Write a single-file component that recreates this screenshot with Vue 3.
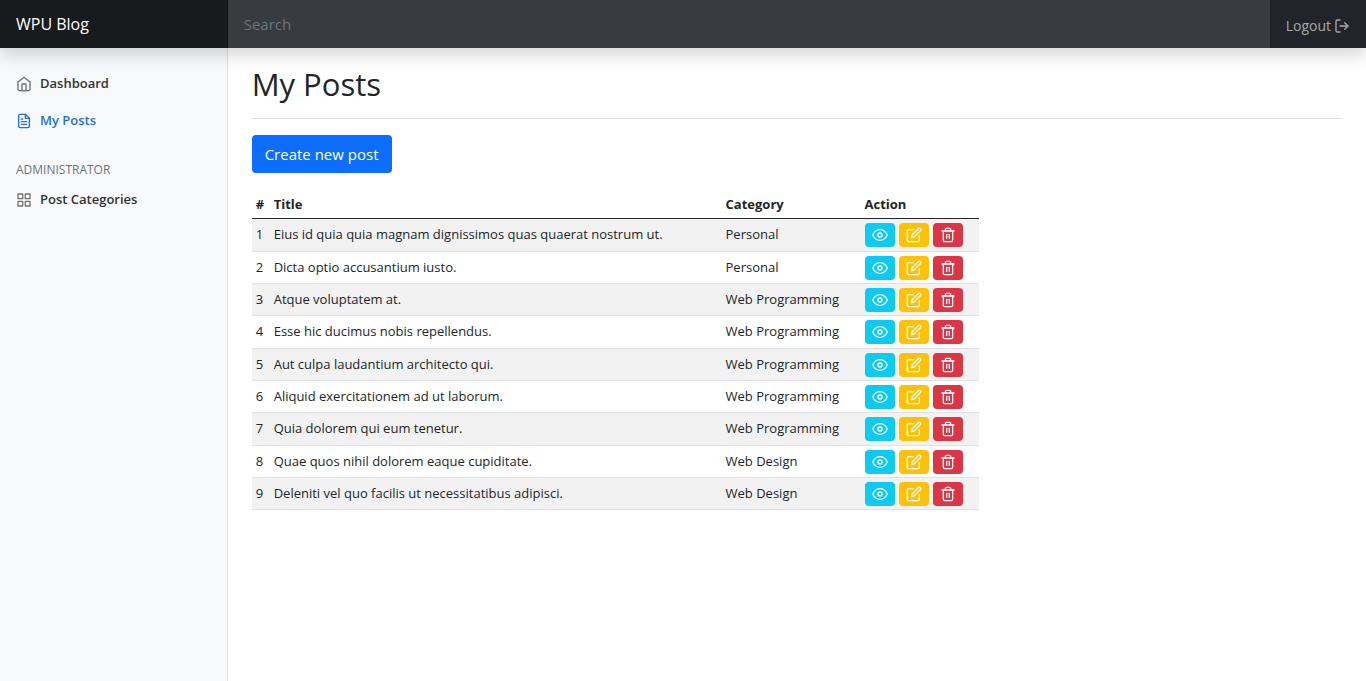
<script setup>
import { ref } from 'vue'

const search = ref('')

const posts = [
  { title: 'Eius id quia quia magnam dignissimos quas quaerat nostrum ut.', category: 'Personal' },
  { title: 'Dicta optio accusantium iusto.', category: 'Personal' },
  { title: 'Atque voluptatem at.', category: 'Web Programming' },
  { title: 'Esse hic ducimus nobis repellendus.', category: 'Web Programming' },
  { title: 'Aut culpa laudantium architecto qui.', category: 'Web Programming' },
  { title: 'Aliquid exercitationem ad ut laborum.', category: 'Web Programming' },
  { title: 'Quia dolorem qui eum tenetur.', category: 'Web Programming' },
  { title: 'Quae quos nihil dolorem eaque cupiditate.', category: 'Web Design' },
  { title: 'Deleniti vel quo facilis ut necessitatibus adipisci.', category: 'Web Design' },
]
</script>

<template>
  <div class="page">
    <header class="topbar">
      <a class="brand" href="#">WPU Blog</a>
      <input v-model="search" class="search" type="text" placeholder="Search" aria-label="Search" />
      <button class="logout" type="button">
        Logout
        <svg class="logout-icon" viewBox="0 0 24 24" aria-hidden="true">
          <path d="M9 21H5a2 2 0 0 1-2-2V5a2 2 0 0 1 2-2h4" />
          <polyline points="16 17 21 12 16 7" />
          <line x1="21" y1="12" x2="9" y2="12" />
        </svg>
      </button>
    </header>

    <div class="body">
      <nav class="sidebar" aria-label="Main">
        <a class="nav-link" href="#">
          <svg viewBox="0 0 24 24" aria-hidden="true">
            <path d="M3 9l9-7 9 7v11a2 2 0 0 1-2 2H5a2 2 0 0 1-2-2z" />
            <polyline points="9 22 9 12 15 12 15 22" />
          </svg>
          Dashboard
        </a>
        <a class="nav-link active" href="#" aria-current="page">
          <svg viewBox="0 0 24 24" aria-hidden="true">
            <path d="M14 2H6a2 2 0 0 0-2 2v16a2 2 0 0 0 2 2h12a2 2 0 0 0 2-2V8z" />
            <polyline points="14 2 14 8 20 8" />
            <line x1="16" y1="13" x2="8" y2="13" />
            <line x1="16" y1="17" x2="8" y2="17" />
            <polyline points="10 9 9 9 8 9" />
          </svg>
          My Posts
        </a>
        <h2 class="nav-heading">Administrator</h2>
        <a class="nav-link" href="#">
          <svg viewBox="0 0 24 24" aria-hidden="true">
            <rect x="3" y="3" width="7" height="7" />
            <rect x="14" y="3" width="7" height="7" />
            <rect x="14" y="14" width="7" height="7" />
            <rect x="3" y="14" width="7" height="7" />
          </svg>
          Post Categories
        </a>
      </nav>

      <main class="content">
        <h1 class="title">My Posts</h1>
        <a class="create" href="#">Create new post</a>
        <table class="posts">
          <thead>
            <tr>
              <th class="col-number" scope="col">#</th>
              <th scope="col">Title</th>
              <th class="col-category" scope="col">Category</th>
              <th class="col-action" scope="col">Action</th>
            </tr>
          </thead>
          <tbody>
            <tr v-for="(post, i) in posts" :key="post.title">
              <td>{{ i + 1 }}</td>
              <td>{{ post.title }}</td>
              <td>{{ post.category }}</td>
              <td>
                <div class="actions">
                  <a class="badge view" href="#" aria-label="View post">
                    <svg viewBox="0 0 24 24" aria-hidden="true">
                      <path d="M1 12s4-8 11-8 11 8 11 8-4 8-11 8-11-8-11-8z" />
                      <circle cx="12" cy="12" r="3" />
                    </svg>
                  </a>
                  <a class="badge edit" href="#" aria-label="Edit post">
                    <svg viewBox="0 0 24 24" aria-hidden="true">
                      <path d="M11 4H4a2 2 0 0 0-2 2v14a2 2 0 0 0 2 2h14a2 2 0 0 0 2-2v-7" />
                      <path d="M18.5 2.5a2.121 2.121 0 0 1 3 3L12 15l-4 1 1-4 9.5-9.5z" />
                    </svg>
                  </a>
                  <button class="badge delete" type="button" aria-label="Delete post">
                    <svg viewBox="0 0 24 24" aria-hidden="true">
                      <polyline points="3 6 5 6 21 6" />
                      <path d="M19 6v14a2 2 0 0 1-2 2H7a2 2 0 0 1-2-2V6m3 0V4a2 2 0 0 1 2-2h4a2 2 0 0 1 2 2v2" />
                      <line x1="10" y1="11" x2="10" y2="17" />
                      <line x1="14" y1="11" x2="14" y2="17" />
                    </svg>
                  </button>
                </div>
              </td>
            </tr>
          </tbody>
        </table>
      </main>
    </div>
  </div>
</template>

<style>
body {
  margin: 0;
  background: #fff;
}
</style>

<style scoped>
* {
  box-sizing: border-box;
}

.page {
  display: flex;
  flex-direction: column;
  min-height: 100vh;
  color: #212529;
  font-family: "Segoe UI", "Open Sans", "Noto Sans", sans-serif;
  font-size: 15px;
  line-height: 24px;
}

a {
  text-decoration: none;
}

button {
  border: 0;
  font: inherit;
  cursor: pointer;
}

svg {
  display: block;
  flex: none;
  width: 16px;
  height: 16px;
  fill: none;
  stroke: currentColor;
  stroke-width: 2;
  stroke-linecap: round;
  stroke-linejoin: round;
}

.topbar {
  position: sticky;
  top: 0;
  z-index: 1;
  display: flex;
  background: #212529;
  box-shadow: 0 8px 16px rgba(0, 0, 0, 0.15);
}

.brand {
  flex: 0 0 16.6667%;
  padding: 12px 16px;
  background: rgba(0, 0, 0, 0.25);
  box-shadow: inset -1px 0 0 rgba(0, 0, 0, 0.25);
  color: #fff;
  font-size: 16px;
  font-weight: 500;
}

.search {
  flex: 1;
  min-width: 0;
  padding: 12px 16px;
  border: 0;
  outline: 0;
  background: #383b3f;
  color: #fff;
  font: inherit;
}

.search::placeholder {
  color: #6c757d;
  opacity: 1;
}

.logout {
  display: flex;
  align-items: center;
  gap: 3px;
  padding: 3px 16px 0;
  background: transparent;
  color: #a6a8a9;
  font-size: 14px;
}

.body {
  display: flex;
  flex: 1;
}

.sidebar {
  flex: 0 0 16.6667%;
  padding-top: 17px;
  background: #f8f9fa;
  box-shadow: inset -1px 0 0 rgba(0, 0, 0, 0.1);
}

.nav-link {
  display: flex;
  align-items: center;
  gap: 8px;
  padding: 8px 16px;
  color: #333;
  font-size: 13px;
  font-weight: 600;
  line-height: 21px;
}

.nav-link svg {
  color: #727272;
}

.nav-link.active,
.nav-link.active svg {
  color: #2470dc;
}

.nav-heading {
  margin: 24px 0 4px;
  padding: 0 16px;
  color: #6c757d;
  font-size: 12px;
  font-weight: 500;
  line-height: 14px;
  text-transform: uppercase;
}

.content {
  flex: 1;
  min-width: 0;
  padding: 17px 24px;
}

.title {
  margin: 0 0 16px;
  padding-bottom: 15px;
  border-bottom: 1px solid #dee2e6;
  font-size: 31px;
  font-weight: 500;
  line-height: 38px;
}

.create {
  display: inline-block;
  margin-bottom: 16px;
  padding: 7px 13px;
  border-radius: 4px;
  background: #0d6efd;
  color: #fff;
}

.posts {
  width: 66.6667%;
  border-collapse: collapse;
  font-size: 13px;
  line-height: 22px;
}

.posts th {
  padding: 4px 4px 3px;
  border-bottom: 1px solid #212529;
  font-weight: 700;
  text-align: left;
}

.posts td {
  height: 32px;
  padding: 4px 4px 0;
  border-bottom: 1px solid #dee2e6;
  vertical-align: top;
}

.posts tbody tr:nth-child(3n + 1) td {
  height: 33px;
}

.posts tbody tr:nth-child(odd) {
  background: #f2f2f2;
}

.posts .col-number {
  width: 18px;
}

.posts .col-category {
  width: 139px;
}

.posts .col-action {
  width: 118px;
}

.actions {
  display: flex;
  gap: 4px;
}

.badge {
  display: flex;
  align-items: center;
  justify-content: center;
  width: 30px;
  height: 24px;
  padding: 0;
  border-radius: 4px;
  color: #fff;
}

.view {
  background: #0dcaf0;
}

.edit {
  background: #ffc107;
}

.delete {
  background: #dc3545;
}
</style>
